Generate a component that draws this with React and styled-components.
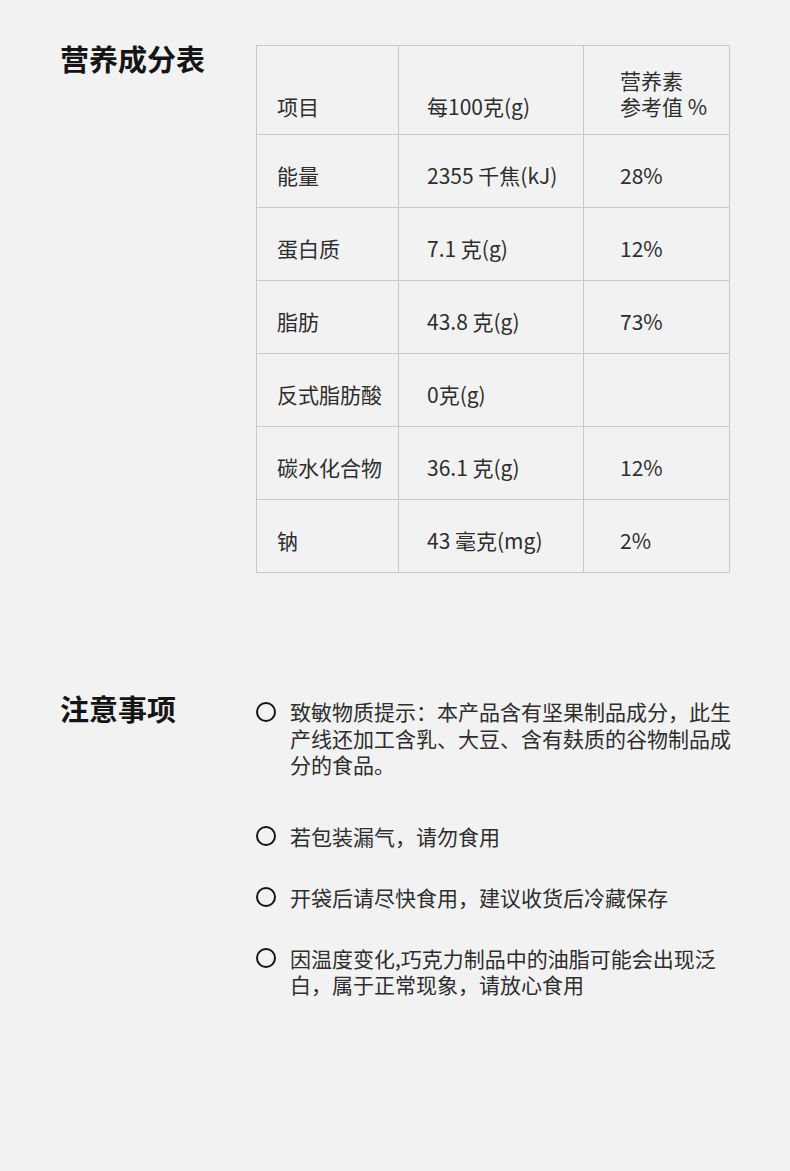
import React from 'react';
import styled, { createGlobalStyle } from 'styled-components';

const GlobalStyle = createGlobalStyle`
  html, body {
    margin: 0;
    padding: 0;
    background: #f2f2f2;
  }
  body {
    font-family: "Noto Sans CJK SC", "Noto Sans", sans-serif;
    color: #2e2e2e;
  }
`;

const Page = styled.div`
  min-height: 1171px;
  padding-top: 44px;
  box-sizing: border-box;
`;

// one block = heading on the left, content on the right
const Section = styled.section`
  display: grid;
  grid-template-columns: 196px 474px;
  padding-left: 60px;
  margin-top: ${(p) => p.$top || 0}px;
`;

const Heading = styled.h2`
  margin: 0;
  font-size: 29px;
  line-height: 29px;
  font-weight: 700;
  color: #151515;
`;

// nutrition table
const Table = styled.div`
  display: grid;
  grid-template-columns: 142px 185px 146px;
  border-top: 1px solid #c9c9c9;
  border-left: 1px solid #c9c9c9;
  margin-top: 1px;
`;

const Cell = styled.div`
  box-sizing: border-box;
  height: ${(p) => (p.$head ? 89 : 73)}px;
  border-right: 1px solid #c9c9c9;
  border-bottom: 1px solid #c9c9c9;
  display: flex;
  flex-direction: column;
  justify-content: ${(p) => (p.$head ? 'flex-end' : 'center')};
  padding-left: ${(p) => p.$pad}px;
  padding-top: ${(p) => (p.$head ? 0 : 7)}px;
  padding-bottom: ${(p) => (p.$head ? 15 : 0)}px;
  font-size: 21px;
  line-height: 26px;
  color: #2e2e2e;
  white-space: nowrap;
`;

// notes list
const List = styled.ul`
  list-style: none;
  margin: 4px 0 0;
  padding: 0;
  display: flex;
  flex-direction: column;
  gap: 34px;
`;

const Item = styled.li`
  display: flex;
  align-items: flex-start;
  gap: 14px;
  margin-bottom: ${(p) => (p.$extra ? 11 : 0)}px;
`;

const Dot = styled.span`
  flex: none;
  height: 27px;
  display: flex;
  align-items: center;

  &::before {
    content: '';
    display: block;
    width: 16px;
    height: 16px;
    border: 2px solid #151515;
    border-radius: 50%;
  }
`;

const Text = styled.p`
  margin: 0;
  font-size: 21px;
  line-height: 26.5px;
  color: #2e2e2e;
  white-space: nowrap;
`;

const pads = [20, 28, 36];

const rows = [
  ['能量', '2355 千焦(kJ)', '28%'],
  ['蛋白质', '7.1 克(g)', '12%'],
  ['脂肪', '43.8 克(g)', '73%'],
  ['反式脂肪酸', '0克(g)', ''],
  ['碳水化合物', '36.1 克(g)', '12%'],
  ['钠', '43 毫克(mg)', '2%'],
];

const notes = [
  ['致敏物质提示：本产品含有坚果制品成分，此生', '产线还加工含乳、大豆、含有麸质的谷物制品成', '分的食品。'],
  ['若包装漏气，请勿食用'],
  ['开袋后请尽快食用，建议收货后冷藏保存'],
  ['因温度变化,巧克力制品中的油脂可能会出现泛', '白，属于正常现象，请放心食用'],
];

export default function App() {
  return (
    <Page>
      <GlobalStyle />

      <Section>
        <Heading>营养成分表</Heading>
        <Table>
          <Cell $head $pad={pads[0]}>项目</Cell>
          <Cell $head $pad={pads[1]}>每100克(g)</Cell>
          <Cell $head $pad={pads[2]}>
            <span>营养素</span>
            <span>参考值 %</span>
          </Cell>
          {rows.map((r) =>
            r.map((v, i) => (
              <Cell key={r[0] + i} $pad={pads[i]}>{v}</Cell>
            ))
          )}
        </Table>
      </Section>

      <Section $top={121}>
        <Heading>注意事项</Heading>
        <List>
          {notes.map((lines, i) => (
            <Item key={i} $extra={i === 0}>
              <Dot />
              <Text>
                {lines.map((l, j) => (
                  <React.Fragment key={j}>
                    {j > 0 && <br />}
                    {l}
                  </React.Fragment>
                ))}
              </Text>
            </Item>
          ))}
        </List>
      </Section>
    </Page>
  );
}
